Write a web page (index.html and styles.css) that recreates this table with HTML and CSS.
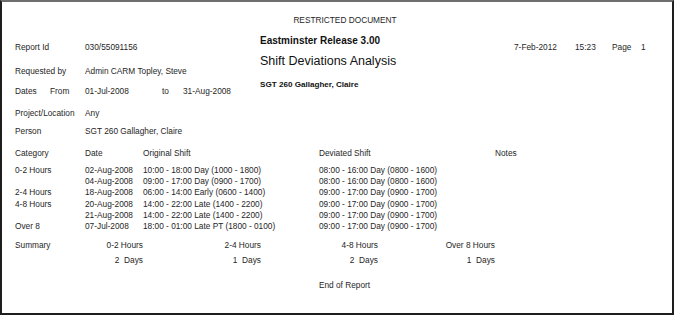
FILE: index.html
```html
<!DOCTYPE html>
<html>
<head>
<meta charset="utf-8">
<link rel="stylesheet" href="styles.css">
</head>
<body>
<div class="page">
  <div class="classification">RESTRICTED DOCUMENT</div>
  <div class="header">
    <div class="meta">
      <div class="row r1"><span class="lbl">Report Id</span><span>030/55091156</span></div>
      <div class="row r2"><span class="lbl">Requested by</span><span>Admin CARM Topley, Steve</span></div>
      <div class="row r3"><span class="lbl lbl-split"><span>Dates</span><span>From</span></span><span class="from">01-Jul-2008</span><span class="to">to</span><span>31-Aug-2008</span></div>
      <div class="row r4"><span class="lbl">Project/Location</span><span>Any</span></div>
      <div class="row r5"><span class="lbl">Person</span><span>SGT 260 Gallagher, Claire</span></div>
    </div>
    <div class="titles">
      <div class="product">Eastminster Release 3.00</div>
      <div class="report-title">Shift Deviations Analysis</div>
      <div class="subject">SGT 260 Gallagher, Claire</div>
    </div>
    <div class="stamp">
      <span class="s-date">7-Feb-2012</span><span class="s-time">15:23</span><span class="s-page">Page</span><span>1</span>
    </div>
  </div>

  <div class="table">
    <div class="trow thead"><span>Category</span><span>Date</span><span>Original Shift</span><span>Deviated Shift</span><span>Notes</span></div>
    <div class="tbody">
      <div class="trow"><span>0-2 Hours</span><span>02-Aug-2008</span><span>10:00 - 18:00 Day (1000 - 1800)</span><span>08:00 - 16:00 Day (0800 - 1600)</span><span></span></div>
      <div class="trow"><span></span><span>04-Aug-2008</span><span>09:00 - 17:00 Day (0900 - 1700)</span><span>08:00 - 16:00 Day (0800 - 1600)</span><span></span></div>
      <div class="trow"><span>2-4 Hours</span><span>18-Aug-2008</span><span>06:00 - 14:00 Early (0600 - 1400)</span><span>09:00 - 17:00 Day (0900 - 1700)</span><span></span></div>
      <div class="trow"><span>4-8 Hours</span><span>20-Aug-2008</span><span>14:00 - 22:00 Late (1400 - 2200)</span><span>09:00 - 17:00 Day (0900 - 1700)</span><span></span></div>
      <div class="trow"><span></span><span>21-Aug-2008</span><span>14:00 - 22:00 Late (1400 - 2200)</span><span>09:00 - 17:00 Day (0900 - 1700)</span><span></span></div>
      <div class="trow"><span>Over 8</span><span>07-Jul-2008</span><span>18:00 - 01:00 Late PT (1800 - 0100)</span><span>09:00 - 17:00 Day (0900 - 1700)</span><span></span></div>
    </div>
  </div>

  <div class="summary">
    <span class="sum-lbl">Summary</span>
    <span class="num">0-2 Hours</span><span class="num">2-4 Hours</span><span class="num">4-8 Hours</span><span class="num">Over 8 Hours</span>
    <span></span>
    <span class="num days">2  Days</span><span class="num days">1  Days</span><span class="num days">2  Days</span><span class="num days">1  Days</span>
  </div>

  <div class="end">End of Report</div>
</div>
</body>
</html>
```
FILE: styles.css
```css
html, body {
  margin: 0;
  padding: 0;
  background: #ffffff;
}

body {
  font-family: "Liberation Sans", Arial, sans-serif;
  font-size: 8.3px;
  line-height: 11px;
  color: #262626;
}

.page {
  box-sizing: border-box;
  width: 674px;
  height: 315px;
  border-top: 2px solid #6e6e6e;
  border-left: 2px solid #1e1e1e;
  border-right: 2px solid #1e1e1e;
  border-bottom: 2px solid #1e1e1e;
  padding: 13px 0 0 13px;
  overflow: hidden;
}

.classification {
  width: 670px;
  margin-left: -13px;
  padding-left: 16px;
  box-sizing: border-box;
  text-align: center;
}

.header {
  display: flex;
}

.meta {
  width: 245px;
  flex: none;
}

.row {
  display: flex;
  white-space: nowrap;
}

.r1 { margin-top: 16px; }
.r2 { margin-top: 13px; }
.r3 { margin-top: 9px; }
.r4 { margin-top: 11px; }
.r5 { margin-top: 7px; }

.lbl {
  width: 70px;
  flex: none;
}

.lbl-split {
  display: flex;
}

.lbl-split span:first-child {
  width: 35px;
}

.from { width: 77px; }
.to { width: 21px; }

.titles {
  width: 254px;
  flex: none;
  white-space: nowrap;
  color: #111111;
}

.product {
  margin-top: 9px;
  font-weight: bold;
  font-size: 10px;
  line-height: 12px;
}

.report-title {
  margin-top: 6px;
  font-size: 12.5px;
  line-height: 16px;
}

.subject {
  margin-top: 10px;
  font-weight: bold;
  font-size: 8.1px;
}

.stamp {
  display: flex;
  white-space: nowrap;
  margin-top: 16px;
  align-self: flex-start;
}

.s-date { width: 61px; }
.s-time { width: 37px; }
.s-page { width: 29px; }

.table {
  margin-top: 11px;
}

.trow {
  display: grid;
  grid-template-columns: 70px 58px 176px 176px 1fr;
  white-space: nowrap;
}

.thead {
  margin-bottom: 6px;
}

.tbody .trow {
  height: 11.2px;
}

.summary {
  margin-top: 8px;
  display: grid;
  grid-template-columns: 70px 58px 118px 117px 117px;
  grid-auto-rows: 15px;
  white-space: pre;
}

.num {
  text-align: right;
}

.end {
  margin-left: -13px;
  width: 670px;
  box-sizing: border-box;
  padding-left: 15px;
  text-align: center;
  margin-top: 10px;
}
```
